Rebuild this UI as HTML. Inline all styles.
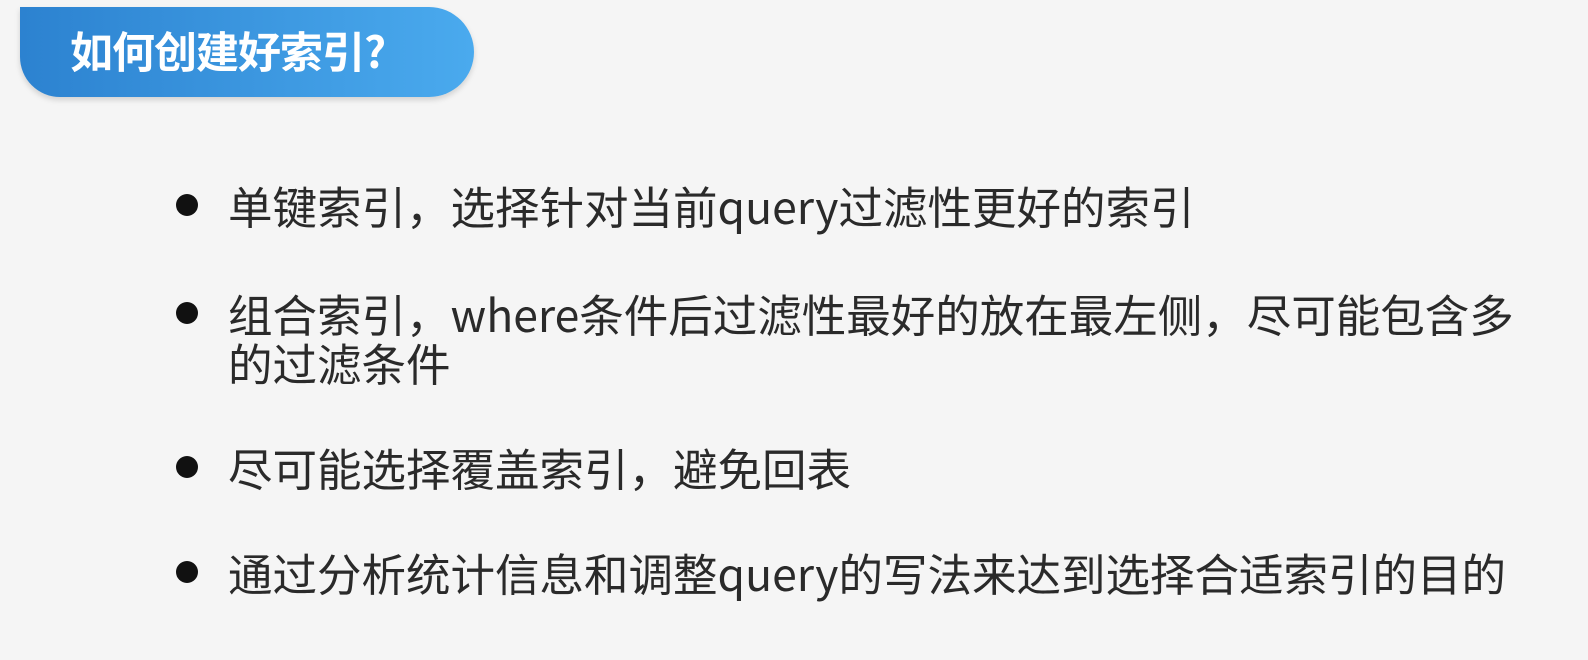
<!DOCTYPE html>
<html><head><meta charset="utf-8"><style>
html,body{margin:0;padding:0}
body{width:1588px;height:660px;overflow:hidden;background:#f5f5f5;position:relative;font-family:"Liberation Sans","Noto Sans CJK SC",sans-serif}
.banner{position:absolute;left:20px;top:7px;width:454px;height:90px;background:linear-gradient(90deg,#2c82d0,#4aaaee);border-radius:0 45px 45px 40px;box-shadow:0 3px 6px rgba(0,0,0,.15)}
.banner span{position:absolute;left:50px;top:-2px;line-height:90px;font-size:43px;font-weight:bold;color:#fff;font-family:"Noto Sans CJK SC",sans-serif;letter-spacing:-1px}
.item{position:absolute;left:228px;font-size:44.5px;line-height:49px;color:#2a2a2a;font-family:"Noto Sans CJK SC",sans-serif;white-space:nowrap}
.dot{position:absolute;left:176px;width:22px;height:22px;border-radius:50%;background:#111}
</style></head><body>
<div class="banner"><span>如何创建好索引?</span></div>
<div class="dot" style="top:194px"></div>
<div class="item" style="top:180px">单键索引，选择针对当前query过滤性更好的索引</div>
<div class="dot" style="top:302px"></div>
<div class="item" style="top:288px">组合索引，where条件后过滤性最好的放在最左侧，尽可能包含多<br>的过滤条件</div>
<div class="dot" style="top:456px"></div>
<div class="item" style="top:442px">尽可能选择覆盖索引，避免回表</div>
<div class="dot" style="top:561px"></div>
<div class="item" style="top:547px">通过分析统计信息和调整query的写法来达到选择合适索引的目的</div>
</body></html>
